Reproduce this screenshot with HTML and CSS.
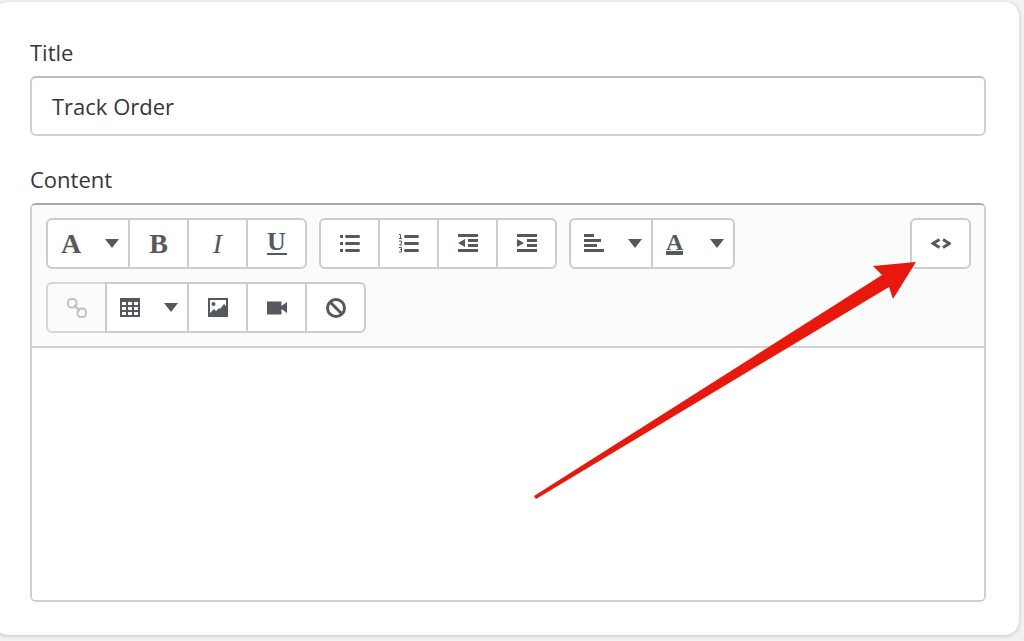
FILE: index.html
```html
<!DOCTYPE html>
<html lang="en">
<head>
    <meta charset="UTF-8">
    <meta name="viewport" content="width=device-width, initial-scale=1.0">
    <title>Track Order</title>
    <link rel="stylesheet" href="styles.css">
</head>
<body>
    <main class="card">
        <form>
            <div class="field">
                <label for="title">Title</label>
                <input type="text" id="title" name="title" value="Track Order">
            </div>

            <div class="field">
                <label for="content">Content</label>
                <div class="editor">
                    <div class="toolbar">
                        <div class="groups">
                            <div class="group">
                                <button type="button" class="wide" aria-label="Formatting"><span class="letter">A</span><span class="caret"></span></button>
                                <button type="button" aria-label="Bold"><span class="letter bold">B</span></button>
                                <button type="button" aria-label="Italic"><span class="letter italic">I</span></button>
                                <button type="button" aria-label="Underline"><span class="letter underline">U</span></button>
                            </div>

                            <div class="group">
                                <button type="button" aria-label="Bulleted list">
                                    <svg class="icon" viewBox="0 0 20 20"><path d="M0 1h3v3H0zM0 8h3v3H0zM0 15h3v3H0z"/><path d="M6 1h13l1 1v1l-1 1H6L5 3V2zM6 8h13l1 1v1l-1 1H6l-1-1V9zM6 15h13l1 1v1l-1 1H6l-1-1v-1z"/></svg>
                                </button>
                                <button type="button" aria-label="Numbered list">
                                    <svg class="icon" viewBox="0 0 20 20"><path d="M6 1h13l1 1v1l-1 1H6L5 3V2zM6 8h13l1 1v1l-1 1H6l-1-1V9zM6 15h13l1 1v1l-1 1H6l-1-1v-1z"/><path class="thin" d="M0 .5h1.500v4M0 4.500h3M0 7h2.500v2L.5 11H3M0 13.500h2.500v4.500H0M1 15.500h1.500"/></svg>
                                </button>
                                <button type="button" aria-label="Outdent">
                                    <svg class="icon" viewBox="0 0 20 20"><path d="M0 0h20v3H0zM10 5h10v3H10zM10 10h10v3H10zM0 15h20v3H0zM7 5v8L0 9z"/></svg>
                                </button>
                                <button type="button" aria-label="Indent">
                                    <svg class="icon" viewBox="0 0 20 20"><path d="M0 0h20v3H0zM10 5h10v3H10zM10 10h10v3H10zM0 15h20v3H0zM0 5v8l7-4z"/></svg>
                                </button>
                            </div>

                            <div class="group">
                                <button type="button" class="wide" aria-label="Alignment">
                                    <svg class="icon" viewBox="0 0 20 20"><path d="M0 0h10v3H0zM0 5h17v3H0zM0 10h13v3H0zM0 15h20v3H0z"/></svg>
                                    <span class="caret"></span>
                                </button>
                                <button type="button" class="wide" aria-label="Color"><span class="letter color">A</span><span class="caret"></span></button>
                            </div>

                            <div class="group">
                                <button type="button" aria-label="Insert link" disabled>
                                    <svg class="icon" viewBox="0 0 20 20"><g class="stroke"><rect x="1" y="1" width="8.500" height="8.500" rx="3.600"/><rect x="10.500" y="10.500" width="8.500" height="8.500" rx="3.600"/><path d="M7 7l6 6"/></g></svg>
                                </button>
                                <button type="button" class="wide" aria-label="Insert table">
                                    <svg class="icon" viewBox="0 0 20 20"><path fill-rule="evenodd" d="M0 0h20v19H0zM2 4v3h4V4zM8 4v3h4V4zM14 4v3h4V4zM2 9v3h4V9zM8 9v3h4V9zM14 9v3h4V9zM2 14v3h4v-3zM8 14v3h4v-3zM14 14v3h4v-3z"/></svg>
                                    <span class="caret"></span>
                                </button>
                                <button type="button" aria-label="Insert image">
                                    <svg class="icon" viewBox="0 0 20 20"><path fill-rule="evenodd" d="M0 0h20v19H0zM2 2v13l4-4 2 2 3-3 1 1 4-5 2 2V2z"/><circle cx="5.500" cy="6" r="2"/></svg>
                                </button>
                                <button type="button" aria-label="Insert video">
                                    <svg class="icon" viewBox="0 0 20 20"><path d="M0 3.500h14.500v4.500L20 4v11l-5.500-4v5.500H0z"/></svg>
                                </button>
                                <button type="button" aria-label="Clear formatting">
                                    <svg class="icon" viewBox="0 0 20 20"><g class="stroke heavy"><circle cx="10" cy="10" r="8.500"/><path d="M4 4l12 12"/></g></svg>
                                </button>
                            </div>
                        </div>

                        <div class="group">
                            <button type="button" aria-label="Show HTML">
                                <svg class="icon" viewBox="0 0 20 20"><path class="stroke heavy" d="M8.500 5.500L2 9.500l6.500 4M12 5.500l6.500 4-6.500 4"/></svg>
                            </button>
                        </div>
                    </div>
                    <textarea id="content" name="content"></textarea>

                    <!-- arrow pointing at the Show HTML button -->
                    <svg class="arrow" viewBox="0 0 384 238" aria-hidden="true"><path d="M383 0L340 4l9 9L1 234l2 3L356 25l4 12z"/></svg>
                </div>
            </div>
        </form>
    </main>
</body>
</html>
```

FILE: styles.css
```css
* {
    box-sizing: border-box;
}

body {
    margin: 0;
    padding: 2px 5px 6px 0;
    background-color: #f2f2f2;
    font-family: "Open Sans", "Noto Sans", sans-serif;
    font-size: 22px;
    line-height: 32px;
    color: #33373b;
}

.card {
    margin-left: -6px;
    padding: 34px 33px 33px 36px;
    background-color: #fff;
    border-radius: 14px;
    box-shadow: 0 1px 4px rgba(0, 0, 0, 0.2);
}

.field + .field {
    margin-top: 27px;
}

label {
    display: block;
    margin-bottom: 8px;
}

input {
    display: block;
    width: 100%;
    height: 60px;
    padding: 0 20px;
    border: 2px solid #cdd1d5;
    border-top-color: #b9bec3;
    border-radius: 6px;
    background-color: #fff;
    font: inherit;
    color: inherit;
}

.editor {
    position: relative;
    border: 2px solid #cdd1d5;
    border-top-color: #a2a7ab;
    border-radius: 6px;
}

.toolbar {
    display: flex;
    align-items: flex-start;
    justify-content: space-between;
    gap: 12px;
    padding: 13px 13px 13px 14px;
    border-bottom: 2px solid #cdd1d5;
    border-radius: 4px 4px 0 0;
    background-color: #fafbfb;
}

.groups {
    display: flex;
    flex-wrap: wrap;
    gap: 13px 12px;
}

.group {
    display: flex;
}

button {
    display: flex;
    align-items: center;
    justify-content: center;
    width: 61px;
    height: 51px;
    padding: 0;
    border: 2px solid #c9cdd2;
    background-color: #fff;
    color: #55595d;
    cursor: pointer;
}

button + button {
    margin-left: -2px;
}

button:first-child {
    border-top-left-radius: 6px;
    border-bottom-left-radius: 6px;
}

button:last-child {
    border-top-right-radius: 6px;
    border-bottom-right-radius: 6px;
}

button:disabled {
    border-color: #d5d8db;
    background-color: #fafbfb;
    color: #bfc2c5;
    cursor: default;
}

button.wide {
    justify-content: space-between;
    width: 84px;
    padding: 0 9px 0 13px;
}

.icon {
    display: block;
    width: 20px;
    height: 20px;
    fill: currentColor;
}

.icon .stroke,
.icon .thin {
    fill: none;
    stroke: currentColor;
    stroke-width: 2px;
}

.icon .thin {
    stroke-width: 1px;
}

.icon .heavy {
    stroke-width: 3px;
}

.letter {
    width: 20px;
    font-family: "Liberation Serif", serif;
    font-size: 28px;
    font-weight: bold;
    line-height: 28px;
    text-align: center;
}

.italic {
    font-style: italic;
    font-weight: normal;
}

.underline,
.color {
    height: 22px;
    border-bottom: 2px solid currentColor;
    font-size: 26px;
    line-height: 18px;
}

.color {
    width: 17px;
    border-bottom-width: 4px;
    font-size: 24px;
}

.caret {
    border: 7px solid transparent;
    border-top: 9px solid currentColor;
    border-bottom: 0;
}

textarea {
    display: block;
    width: 100%;
    height: 252px;
    padding: 14px 20px;
    border: 0;
    border-radius: 0 0 4px 4px;
    background-color: #fff;
    font: inherit;
    color: inherit;
    resize: none;
}

.arrow {
    position: absolute;
    top: 57px;
    right: 67px;
    width: 384px;
    height: 238px;
    fill: #e8190c;
    pointer-events: none;
}
```
